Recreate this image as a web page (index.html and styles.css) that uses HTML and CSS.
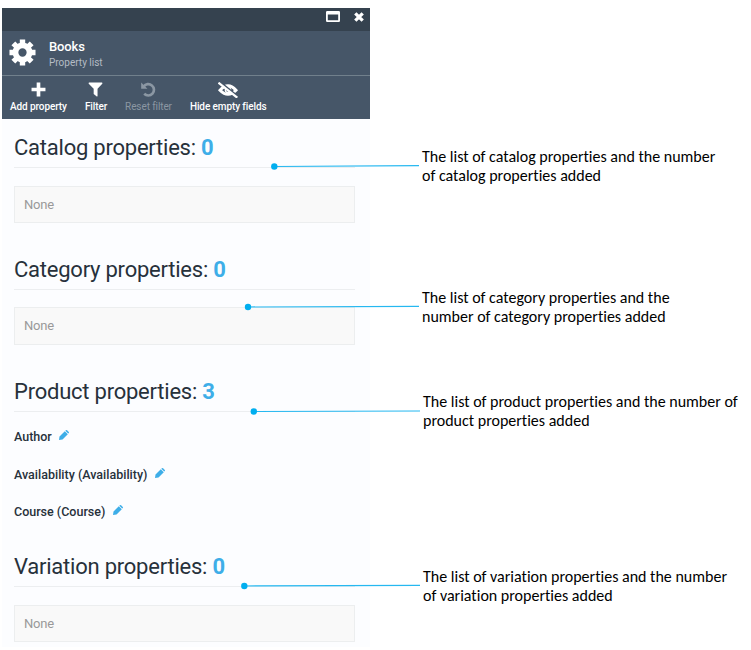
FILE: index.html
```html
<!DOCTYPE html>
<html lang="en">
<head>
<meta charset="utf-8">
<title>Books - Property list</title>
<link rel="stylesheet" href="styles.css">
</head>
<body>
<main class="page">
  <section class="panel">
    <div class="titlebar">
      <svg class="maximize" viewBox="0 0 14 11"><path fill="#fff" fill-rule="evenodd" d="M1.200 0h11.600Q14 0 14 1.200v8.600Q14 11 12.800 11H1.200Q0 11 0 9.800V1.200Q0 0 1.200 0zM1.800 3.500v5.700h10.400V3.500z"/></svg>
      <svg class="close" viewBox="0 0 10 10"><path d="M1.300 1.300l7.400 7.400M8.700 1.300l-7.400 7.400" stroke="#fff" stroke-width="3.300"/></svg>
    </div>
    <header class="heading">
      <svg class="gear" viewBox="-14 -14 28 28">
        <g fill="none" stroke="#fff">
          <circle r="7.300" stroke-width="6"/>
          <path stroke-width="5.600" stroke-linejoin="round" d="M0-13.500V-8M0 13.500V8M-13.500 0H-8M13.500 0H8M-9.500-9.500L-6-6M9.500 9.500L6 6M-9.500 9.500L-6 6M9.500-9.500L6-6"/>
        </g>
      </svg>
      <div class="titles">
        <h1>Books</h1>
        <p>Property list</p>
      </div>
    </header>
    <nav class="toolbar">
      <a class="tool add"><svg viewBox="0 0 14 14"><path d="M7 .5v13M.5 7h13" stroke="#fff" stroke-width="3.400"/></svg><span>Add property</span></a>
      <a class="tool filter"><svg viewBox="0 0 14 14"><path fill="#fff" d="M1 .5h12q.9.400.3 1.200L8.900 6.300V13q-.3.800-1 .3L5.300 11.200V6.300L.7 1.700Q.2.900 1 .5z"/></svg><span>Filter</span></a>
      <a class="tool reset"><svg viewBox="0 0 14 14"><path fill="none" stroke="#8b97a3" stroke-width="2.500" d="M2.500 4.200A5.300 5.300 0 1 1 3 11"/><path fill="#8b97a3" d="M.2.500v5.800H6z"/></svg><span>Reset filter</span></a>
      <a class="tool hide"><svg viewBox="0 0 20 16"><path fill="none" stroke="#fff" stroke-width="3" d="M2 8.200Q10-.5 18 8.200Q10 16.500 2 8.200z"/><circle cx="10" cy="8" r="2.600" fill="none" stroke="#fff" stroke-width="1.500"/><path stroke="#465668" stroke-width="2" d="M2 0l18 14.500"/><path stroke="#fff" stroke-width="2.200" d="M.5 .7l18.800 15"/></svg><span>Hide empty fields</span></a>
    </nav>
    <div class="content">
      <section class="group">
        <h2>Catalog properties: <b>0</b></h2>
        <div class="empty">None</div>
      </section>
      <section class="group category">
        <h2>Category properties: <b>0</b></h2>
        <div class="empty">None</div>
      </section>
      <section class="group product">
        <h2>Product properties: <b>3</b></h2>
        <ul>
          <li>Author<svg class="pencil" viewBox="0 0 10 10"><path fill="#3eaee8" d="M0 10l.5-3.500L5.800 1.200l3 3L3.500 9.500zM6.300.700L6.900.200q.7-.4 1.200 0l1.700 1.700q.4.600 0 1.100l-.6.600z"/></svg></li>
          <li>Availability (Availability)<svg class="pencil" viewBox="0 0 10 10"><path fill="#3eaee8" d="M0 10l.5-3.500L5.800 1.200l3 3L3.500 9.500zM6.300.700L6.900.200q.7-.4 1.200 0l1.700 1.700q.4.600 0 1.100l-.6.600z"/></svg></li>
          <li>Course (Course)<svg class="pencil" viewBox="0 0 10 10"><path fill="#3eaee8" d="M0 10l.5-3.500L5.800 1.200l3 3L3.500 9.500zM6.300.700L6.900.200q.7-.4 1.200 0l1.700 1.700q.4.600 0 1.100l-.6.600z"/></svg></li>
        </ul>
      </section>
      <section class="group variation">
        <h2>Variation properties: <b>0</b></h2>
        <div class="empty">None</div>
      </section>
    </div>
  </section>
  <aside class="notes">
    <p class="note note-catalog">The list of catalog properties and the number<br>of catalog properties added</p>
    <p class="note note-category">The list of category properties and the<br>number of category properties added</p>
    <p class="note note-product">The list of product properties and the number of<br>product properties added</p>
    <p class="note note-variation">The list of variation properties and the number<br>of variation properties added</p>
  </aside>
  <svg class="leaders" viewBox="0 0 751 650">
    <g stroke="#26b8f0" stroke-width="1.200">
      <path d="M274 166.500L419 165.700"/>
      <path d="M248 307L419 306.400"/>
      <path d="M254 411.500L420 411"/>
      <path d="M244 586L420 585.300"/>
    </g>
    <g fill="#00aeef">
      <circle cx="274.300" cy="166.500" r="3.200"/>
      <circle cx="248" cy="307" r="3.200"/>
      <circle cx="253.800" cy="411.500" r="3.200"/>
      <circle cx="244.300" cy="586" r="3.200"/>
    </g>
  </svg>
</main>
</body>
</html>
```

FILE: styles.css
```css
* { box-sizing: border-box; }
body { margin: 0; background: #fff; font-family: Roboto, sans-serif; color: #27313b; }
h1, h2, p, ul { margin: 0; padding: 0; }
svg { display: block; }
.page { position: relative; display: flex; width: 751px; height: 650px; padding: 8px 0 0 2px; overflow: hidden; }
.panel { width: 368px; height: 639px; flex: none; background: #fcfdff; }
.titlebar { height: 23px; background: #35424f; display: flex; justify-content: flex-end; gap: 14px; padding: 3px 6px 0 0; }
.maximize { width: 14px; height: 11px; }
.close { width: 10px; height: 10px; margin-top: 1px; }
.heading { height: 45px; background: #465668; border-bottom: 1px solid #71808c; display: flex; padding: 0 0 0 7px; }
.gear { width: 27px; height: 27px; margin-top: 8px; }
.titles { padding: 8px 0 0 13px; color: #fff; }
.titles h1 { font-size: 13px; line-height: 16px; font-weight: 500; letter-spacing: -.15px; }
.titles p { font-size: 10px; line-height: 16px; color: #b4bcc4; }
.toolbar { height: 43px; background: #465668; display: flex; gap: 18px; padding: 6px 0 0 8px; }
.tool { display: flex; flex-direction: column; align-items: center; gap: 3px; color: #fff; font-size: 10px; line-height: 13px; white-space: nowrap; font-weight: 500; letter-spacing: -.1px; }
.tool svg { width: 15px; height: 15px; }
.tool.hide svg { width: 20px; height: 16px; margin-bottom: -1px; }
.tool.reset { color: #8b97a3; font-weight: 400; }
.content { padding: 8px 15px 0 12px; }
.group { height: 122px; }
.group h2 { height: 41px; border-bottom: 1px solid #eceef0; font-size: 22px; line-height: 42px; font-weight: 400; letter-spacing: -.23px; white-space: nowrap; }
.group b { color: #3eaee8; font-weight: 700; }
.empty { height: 37px; margin-top: 18px; border: 1px solid #eceeef; background: #f9f9f9; color: #999; font-size: 13px; line-height: 35px; padding-left: 9px; letter-spacing: -.2px; }
.category .empty { height: 38px; margin-top: 17px; }
.group.product { height: 175px; }
.product ul { list-style: none; padding-top: 6px; }
.product li { height: 37.500px; display: flex; align-items: center; font-size: 12.500px; font-weight: 500; }
.pencil { width: 10px; height: 10px; margin: -3px 0 0 7.500px; }
.notes { padding: 139px 0 0 52px; color: #000; font-family: Carlito, Lato, sans-serif; font-size: 16px; line-height: 19px; font-variant-ligatures: none; white-space: nowrap; }
.note-category { margin-top: 103px; }
.note-product { margin: 66px 0 0 1px; }
.note-variation { margin: 137px 0 0 1px; }
.leaders { position: absolute; left: 0; top: 0; width: 751px; height: 650px; pointer-events: none; }
```
